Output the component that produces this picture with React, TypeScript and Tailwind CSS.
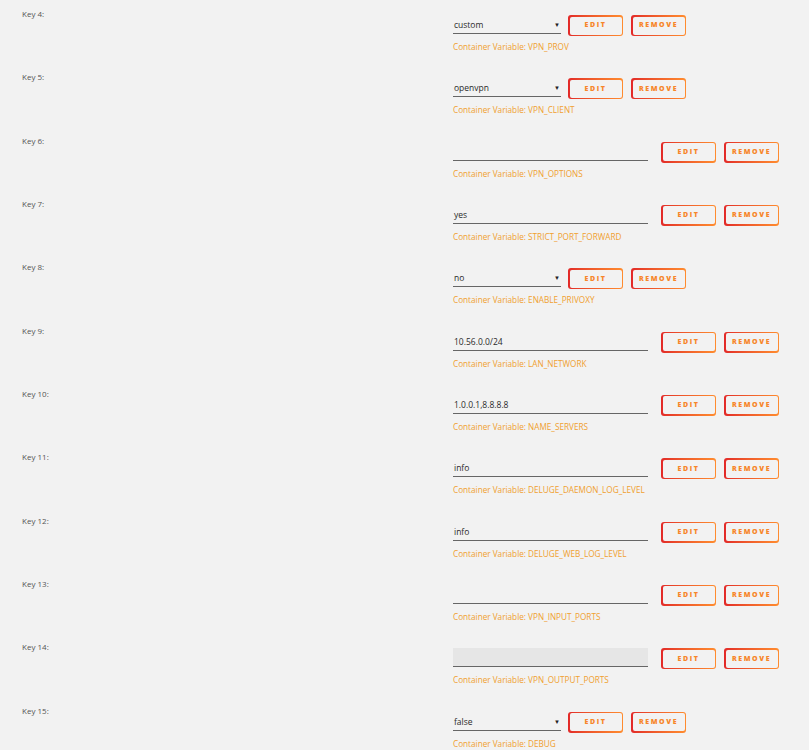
import React from "react";

type Field = {
  key: number;
  name: string;
  value: string;
  kind: "select" | "text";
  disabled?: boolean;
};

const fields: Field[] = [
  { key: 4, name: "VPN_PROV", value: "custom", kind: "select" },
  { key: 5, name: "VPN_CLIENT", value: "openvpn", kind: "select" },
  { key: 6, name: "VPN_OPTIONS", value: "", kind: "text" },
  { key: 7, name: "STRICT_PORT_FORWARD", value: "yes", kind: "text" },
  { key: 8, name: "ENABLE_PRIVOXY", value: "no", kind: "select" },
  { key: 9, name: "LAN_NETWORK", value: "10.56.0.0/24", kind: "text" },
  { key: 10, name: "NAME_SERVERS", value: "1.0.0.1,8.8.8.8", kind: "text" },
  { key: 11, name: "DELUGE_DAEMON_LOG_LEVEL", value: "info", kind: "text" },
  { key: 12, name: "DELUGE_WEB_LOG_LEVEL", value: "info", kind: "text" },
  { key: 13, name: "VPN_INPUT_PORTS", value: "", kind: "text" },
  { key: 14, name: "VPN_OUTPUT_PORTS", value: "", kind: "text", disabled: true },
  { key: 15, name: "DEBUG", value: "false", kind: "select" },
];

function GradientButton({ label }: { label: string }) {
  return (
    <div className="rounded-[3px] bg-gradient-to-r from-[#e22828] to-[#ff8c2f] p-[1.5px]">
      <button className="flex h-[18px] w-[52px] items-center justify-center rounded-[2px] bg-[#f2f2f2] text-[7px] font-extrabold tracking-[1.6px] text-[#f7862a]">
        {label}
      </button>
    </div>
  );
}

function FieldRow({ field }: { field: Field }) {
  const isSelect = field.kind === "select";
  return (
    <div className="flex h-[63.33px]">
      <div className="w-[453px] pl-[22px] pt-[8px] text-[8px] leading-[12px] text-[#555]">
        Key {field.key}:
      </div>
      <div className="pt-[15px]">
        <div className="flex h-[21px] items-start">
          <div
            className={`flex h-[19px] items-end border-b border-[#666] pb-[2px] text-[8.5px] leading-[12px] text-[#2a2a2a] ${
              isSelect ? "w-[108px] justify-between" : "w-[195px]"
            } ${field.disabled ? "bg-[#e6e6e6]" : ""}`}
          >
            <span className="pl-[1px]">{field.value}</span>
            {isSelect && <span className="pr-[1px] text-[6px] text-[#222]">▼</span>}
          </div>
          <div className={`flex gap-[8px] ${isSelect ? "ml-[7px]" : "ml-[13px]"}`}>
            <GradientButton label="EDIT" />
            <GradientButton label="REMOVE" />
          </div>
        </div>
        <div className="mt-[6px] text-[8.2px] leading-[10px] text-[#f0a030]">
          Container Variable: {field.name}
        </div>
      </div>
    </div>
  );
}

export default function App() {
  return (
    <div
      className="h-[750px] w-[809px] overflow-hidden bg-[#f2f2f2]"
      style={{ fontFamily: '"Open Sans", "Noto Sans", sans-serif' }}
    >
      {fields.map((f) => (
        <FieldRow key={f.key} field={f} />
      ))}
    </div>
  );
}
